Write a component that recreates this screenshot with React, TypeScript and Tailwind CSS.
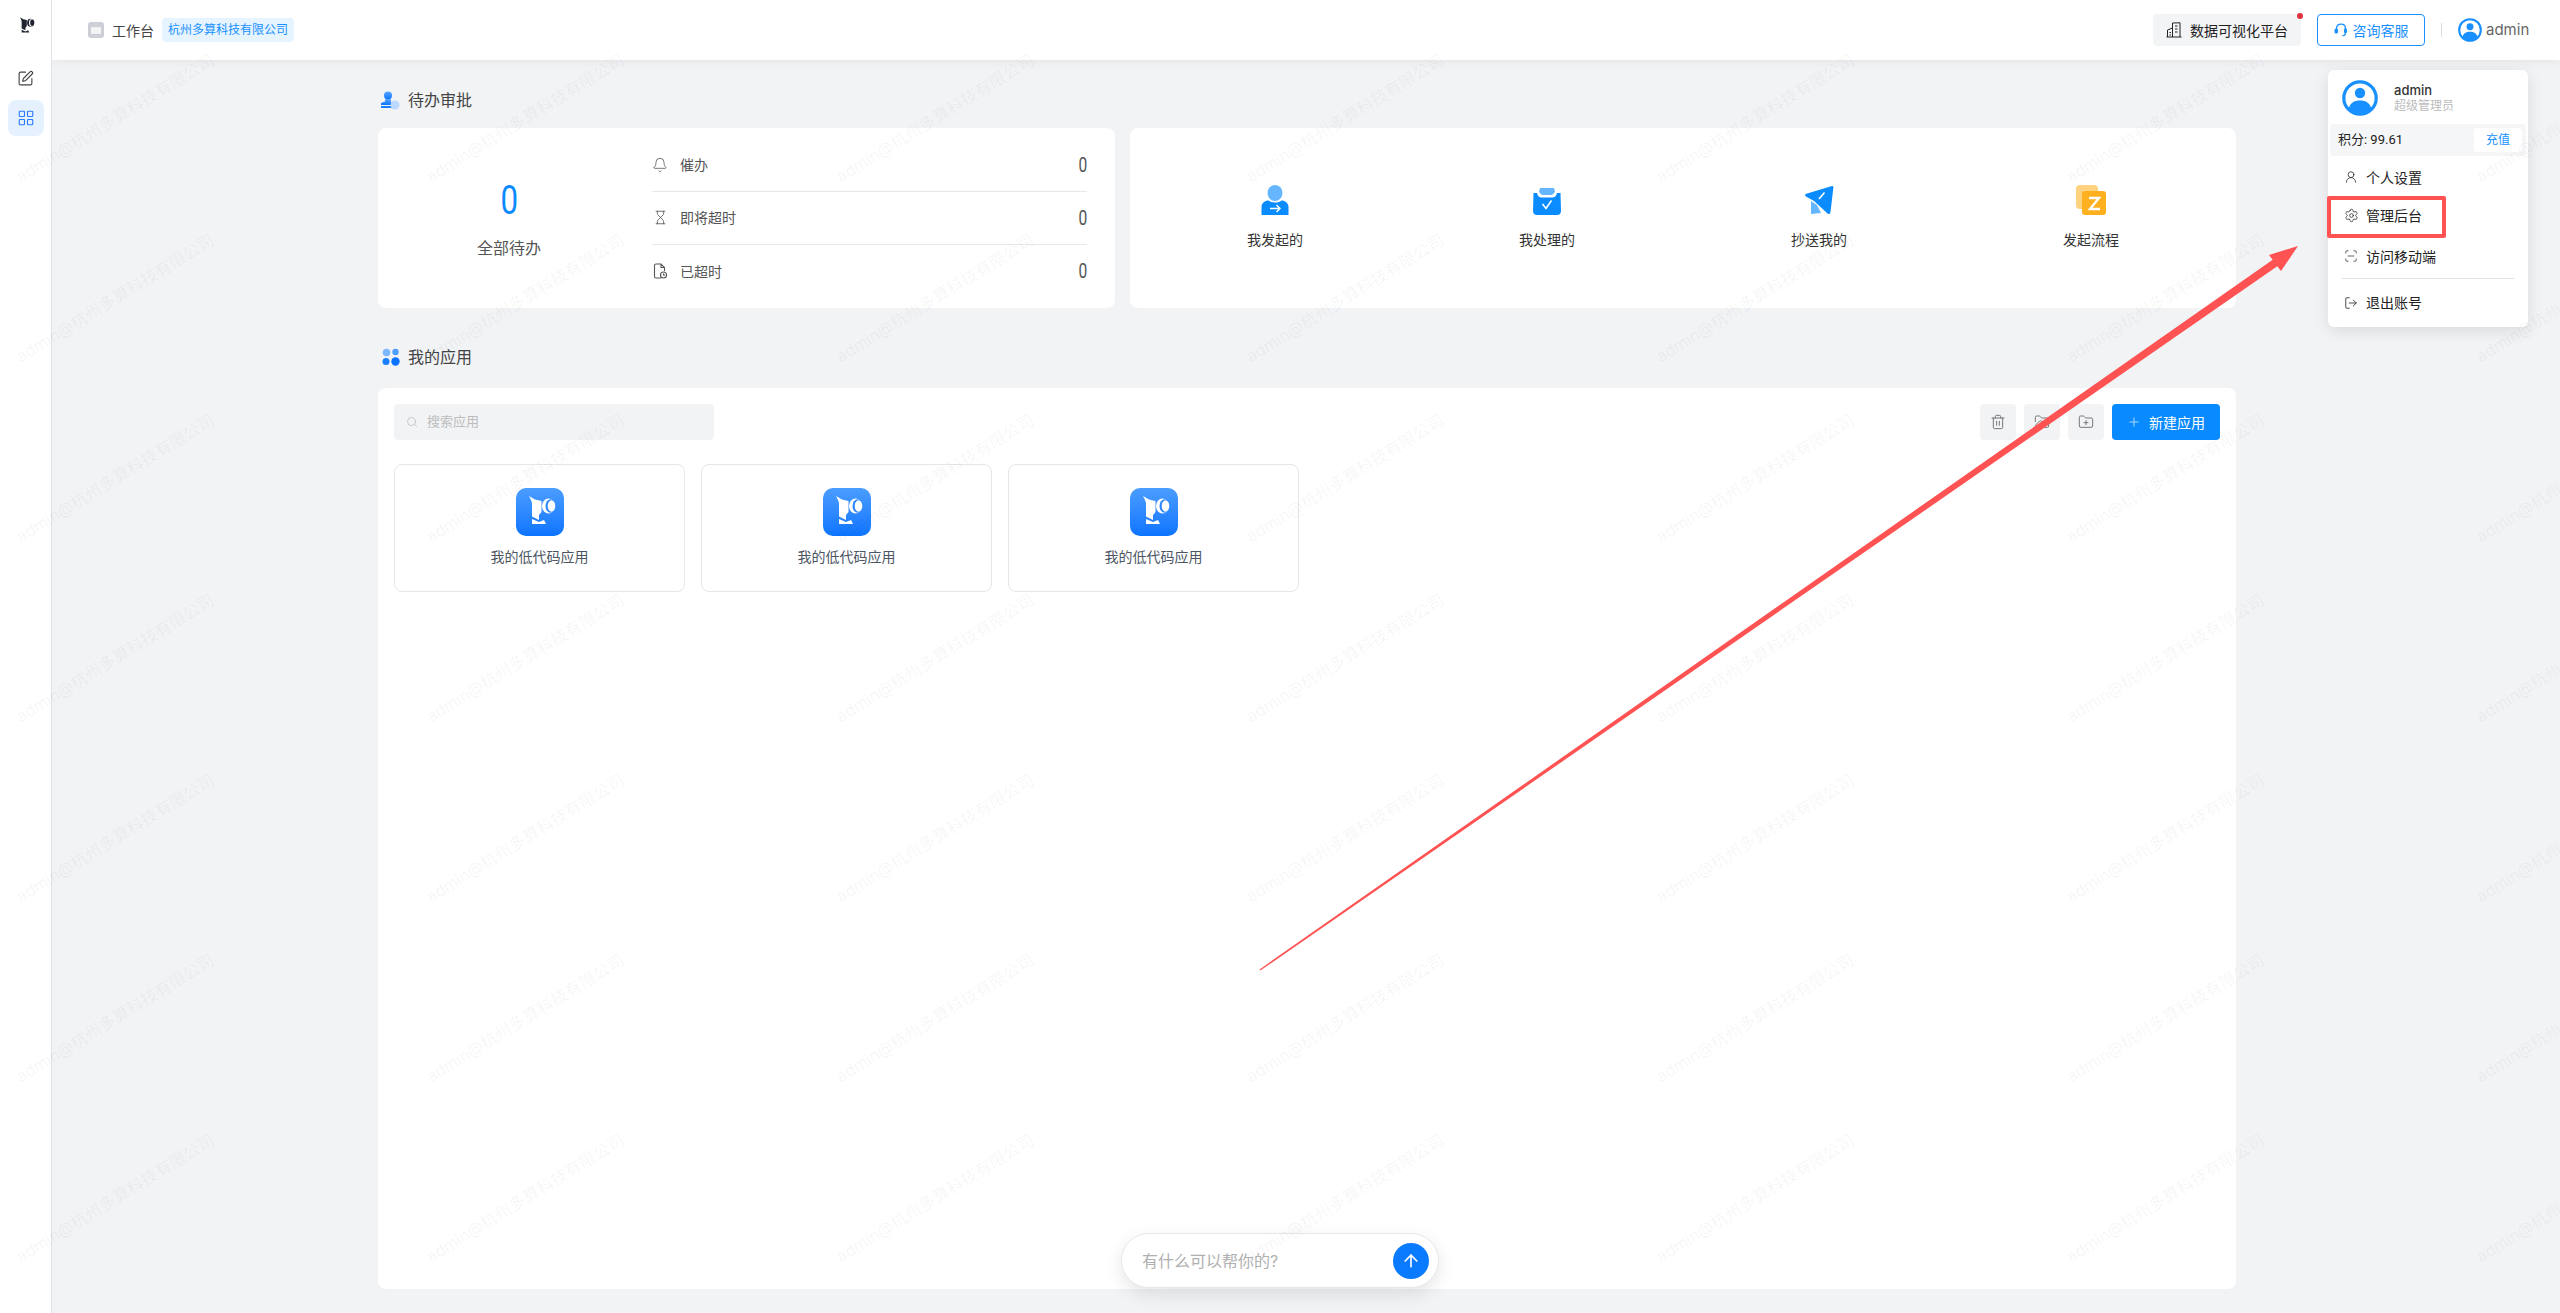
import { Trash2, FolderPen, FolderPlus, UserRound, Settings, ScanLine, LogOut, Bell, Hourglass, SquarePen, LayoutGrid, Search, Plus, ArrowUp } from "lucide-react";

function Logo({ color, bg }: { color: string; bg: string }) {
  return (
    <svg viewBox="0 0 48 48" className="w-full h-full">
      <path d="M13 8 L19 11.5 L25.5 13 L25.5 24 L23 27 L23 32 L16 28.5 L16 15 L15 12 Z" fill={color} />
      <path d="M16 31 L23 34 L28 32 L30 36 L16 36 Z" fill={color} />
      <ellipse cx="32.5" cy="18" rx="6.5" ry="7.5" fill={color} />
      <ellipse cx="34.5" cy="18" rx="5" ry="6.8" fill={bg} />
      <ellipse cx="35.5" cy="18" rx="3.8" ry="5.8" fill={color} />
    </svg>
  );
}

function UserAvatar({ size }: { size: string }) {
  return (
    <svg viewBox="0 0 36 36" className={size}>
      <circle cx="18" cy="18" r="16.2" fill="#fff" stroke="#1890ff" strokeWidth="3.2" />
      <circle cx="18" cy="13" r="5.2" fill="#1890ff" />
      <path d="M6.5 29 C8 23 12 20.5 18 20.5 C24 20.5 28 23 29.5 29 C26 32.5 22 34 18 34 C14 34 10 32.5 6.5 29 Z" fill="#1890ff" />
    </svg>
  );
}

function Watermark() {
  const cells = Array.from({ length: 49 });
  return (
    <div className="absolute left-[-90px] top-[28px] z-40 grid grid-cols-[repeat(7,410px)] auto-rows-[180px] pointer-events-none">
      {cells.map((_, i) => (
        <div key={i} className="flex items-center justify-center">
          <span className="rotate-[-31.5deg] whitespace-nowrap text-[16.5px] text-[rgba(0,0,0,0.05)]">admin@杭州多算科技有限公司</span>
        </div>
      ))}
    </div>
  );
}

function Row({ icon, label, border }: { icon: React.ReactNode; label: string; border?: boolean }) {
  return (
    <div className={`h-[53px] flex items-center ${border ? "border-b border-[#e5e7eb]" : ""}`}>
      <span className="w-[16px] flex justify-center text-[#555]">{icon}</span>
      <span className="ml-[12px] text-[14px] text-[#555]">{label}</span>
      <span className="ml-auto text-[20px] text-[#555] font-['Roboto',sans-serif] inline-block scale-x-[0.78] origin-right">0</span>
    </div>
  );
}

function Action({ icon, label }: { icon: React.ReactNode; label: string }) {
  return (
    <div className="flex flex-col items-center">
      <div className="w-[30px] h-[30px] flex items-center justify-center">{icon}</div>
      <div className="mt-[15px] text-[14px] leading-[20px] text-[#333]">{label}</div>
    </div>
  );
}

function AppCard() {
  return (
    <div className="h-[128px] border border-[#e5e7eb] rounded-lg flex flex-col items-center pt-[23px]">
      <div className="w-[48px] h-[48px] rounded-[10px] bg-gradient-to-b from-[#4a9dff] to-[#0a74ff]">
        <Logo color="#fff" bg="#2e86ff" />
      </div>
      <div className="mt-[11px] text-[14px] leading-[20px] text-[#4b5563]">我的低代码应用</div>
    </div>
  );
}

function MenuItem({ icon, label, h }: { icon: React.ReactNode; label: string; h: string }) {
  return (
    <div className={`flex items-center pl-[15px] text-[14px] text-[#222] ${h}`}>
      <span className="w-[16px] flex justify-center text-[#333]">{icon}</span>
      <span className="ml-[7px]">{label}</span>
    </div>
  );
}

export default function App() {
  return (
    <div className="relative w-[2560px] h-[1313px] overflow-hidden flex bg-[#f1f3f5] font-['Inter','Noto_Sans_CJK_SC',sans-serif]">
      {/* sidebar */}
      <aside className="w-[52px] h-full bg-white border-r border-[#e0e2e7] flex flex-col items-center z-20 shrink-0">
        <div className="w-[26px] h-[26px] mt-[13px]"><Logo color="#1f2430" bg="#fff" /></div>
        <SquarePen className="mt-[31px] w-[17px] h-[17px] text-[#444]" strokeWidth={1.6} />
        <div className="mt-[13px] w-[36px] h-[36px] rounded-lg bg-[#e6f1ff] flex items-center justify-center">
          <LayoutGrid className="w-[18px] h-[18px] text-[#2b7bff]" strokeWidth={1.5} />
        </div>
      </aside>

      <div className="flex-1 flex flex-col min-w-0">
        {/* header */}
        <header className="h-[60px] bg-white shadow-[0_2px_10px_rgba(0,0,0,0.06)] z-10 flex items-center pl-[36px] pr-[32px] shrink-0">
          <div className="w-[16px] h-[16px] rounded-[3px] bg-[#ccd0d6] flex items-center justify-center">
            <div className="w-[10px] h-[7px] bg-[#f2f3f5] rounded-[1px]" />
          </div>
          <span className="ml-[8px] text-[14px] text-[#444]">工作台</span>
          <span className="ml-[8px] h-[24px] px-[6px] rounded bg-[#e6f4ff] text-[#1890ff] text-[12px] leading-[24px]">杭州多算科技有限公司</span>
          <div className="ml-auto relative h-[32px] w-[148px] rounded bg-[#f3f4f6] flex items-center pl-[13px]">
            <svg viewBox="0 0 16 16" className="w-[16px] h-[16px] text-[#222]" fill="none" stroke="currentColor" strokeWidth="1">
              <path d="M0.5 15 H15.5" />
              <path d="M6.5 15 V1 L14 0.8 V15" />
              <path d="M6.5 6 L1.5 8 V15" />
              <path d="M9 4 H11.5 M9 7 H11.5 M9 10 H11.5 M3.5 10.5 H5 M3.5 13 H5" />
            </svg>
            <span className="ml-[8px] text-[14px] text-[#222]">数据可视化平台</span>
            <span className="absolute right-[-2px] top-[-1px] w-[6px] h-[6px] rounded-full bg-[#e0323f]" />
          </div>
          <div className="ml-[16px] h-[32px] w-[108px] rounded border border-[#1890ff] flex items-center justify-center text-[#1890ff] text-[14px]">
            <svg viewBox="0 0 14 14" className="w-[14px] h-[14px]" fill="none">
              <path d="M2.5 6 C2.5 3 4.5 1.2 7 1.2 C9.5 1.2 11.5 3 11.5 6 V10 C11.5 11.5 10.5 12.6 8.5 12.8" stroke="currentColor" strokeWidth="1.3" />
              <rect x="0.5" y="5.5" width="3.5" height="5" rx="1.5" fill="currentColor" />
              <rect x="10" y="5.5" width="3" height="4.5" rx="1.2" fill="currentColor" />
            </svg>
            <span className="ml-[5px]">咨询客服</span>
          </div>
          <div className="ml-[16px] w-px h-[14px] bg-[#ddd]" />
          <UserAvatar size="ml-[16px] w-[24px] h-[24px]" />
          <span className="ml-[4px] w-[42px] text-[15px] text-[#666]">admin</span>
        </header>

        {/* content */}
        <main className="flex-1 flex justify-center min-h-0 pt-[28px] pb-[24px] pl-[2px]">
          <div className="w-[1858px] flex flex-col">
            <div className="h-[24px] flex items-center pl-[2px]">
              <svg viewBox="0 0 20 20" className="w-[20px] h-[20px]">
                <defs>
                  <linearGradient id="pg" x1="0" y1="0" x2="0" y2="1">
                    <stop offset="0" stopColor="#5aa5ff" />
                    <stop offset="1" stopColor="#0a74ff" />
                  </linearGradient>
                </defs>
                <circle cx="8" cy="5.5" r="4" fill="url(#pg)" />
                <path d="M5.5 9 H10.5 L11.5 13 H15 V15 H1 V13.5 C1 12.5 3 12 4.5 12 Z" fill="url(#pg)" />
                <rect x="1" y="16" width="14" height="2" fill="#1a7dff" />
                <circle cx="15" cy="15" r="4.5" fill="#bcd9ff" />
              </svg>
              <span className="ml-[8px] text-[16px] text-[#444]">待办审批</span>
            </div>
            <div className="mt-[16px] h-[180px] flex gap-[15px]">
              <section className="w-[737px] bg-white rounded-lg flex items-center pr-[28px]">
                <div className="w-[262px] flex flex-col items-center">
                  <div className="h-[48px] leading-[48px] text-[40px] text-[#0a8aff] font-['Roboto',sans-serif] inline-block scale-x-[0.78]">0</div>
                  <div className="mt-[11px] text-[16px] leading-[24px] text-[#555]">全部待办</div>
                </div>
                <div className="flex-1 ml-[12px]">
                  <Row icon={<Bell className="w-[16px] h-[16px]" strokeWidth={1.2} />} label="催办" border />
                  <Row icon={<Hourglass className="w-[15px] h-[15px]" strokeWidth={1.3} />} label="即将超时" border />
                  <Row icon={
                    <svg viewBox="0 0 16 16" className="w-[16px] h-[16px]" fill="none" stroke="currentColor" strokeWidth="1.1">
                      <path d="M9 15 H4 C3 15 2.5 14.5 2.5 13.5 V2.5 C2.5 1.5 3 1 4 1 H9 L12.5 4.5 V8" />
                      <path d="M9 1 V4.5 H12.5" />
                      <circle cx="11.5" cy="12" r="3" />
                      <path d="M11.5 10.5 V12 H13" />
                    </svg>
                  } label="已超时" />
                </div>
              </section>
              <section className="flex-1 bg-white rounded-lg grid grid-cols-4 px-[9px] items-start pt-[57px]">
                <Action label="我发起的" icon={
                  <svg viewBox="0 0 30 30" className="w-[30px] h-[30px]">
                    <ellipse cx="15" cy="8" rx="7.5" ry="8" fill="#66b5ff" />
                    <path d="M1.5 30 V22 C1.5 18 5 15.5 8.5 15.5 C10 17 12 17.5 15 17.5 C18 17.5 20 17 21.5 15.5 C25 15.5 28.5 18 28.5 22 V30 Z" fill="#0a8cff" />
                    <path d="M10 23.5 H20 M16.5 20 L20 23.5 L16.5 27" stroke="#fff" strokeWidth="1.4" fill="none" />
                  </svg>
                } />
                <Action label="我处理的" icon={
                  <svg viewBox="0 0 30 30" className="w-[30px] h-[30px]">
                    <path d="M8 3 H22 L23 7 L20 10 H10 L7 7 Z" fill="#66b5ff" />
                    <path d="M1.5 8 H5 C6 12 8 12.5 10 12.5 H20 C22 12.5 24 12 25 8 H28.5 L29 26 C29 28.5 27.5 30 25 30 H5 C2.5 30 1 28.5 1 26 Z" fill="#0a8cff" />
                    <path d="M10.5 19 L14 23.5 L19.5 15.5" stroke="#fff" strokeWidth="1.6" fill="none" />
                  </svg>
                } />
                <Action label="抄送我的" icon={
                  <svg viewBox="0 0 30 30" className="w-[30px] h-[30px]">
                    <path d="M1.5 9 L28 1 C29 1 29.5 1.5 29.4 2.5 L26.5 27 C26 29.5 24 29.5 23 28 L10 16 L2 11.5 C1 11 1 9.5 1.5 9 Z" fill="#0a8cff" />
                    <path d="M7 16 L13 20 L17 28 L7 29 Z" fill="#66b5ff" />
                    <path d="M15 14 L20.5 7.5" stroke="#fff" strokeWidth="1.6" />
                  </svg>
                } />
                <Action label="发起流程" icon={
                  <svg viewBox="0 0 30 30" className="w-[30px] h-[30px]">
                    <rect x="0" y="0" width="22" height="24" rx="4" fill="#ffd27f" />
                    <rect x="6" y="6" width="24" height="24" rx="3" fill="#ffb01f" />
                    <path d="M13 13 H23 L14 24 H24" stroke="#fff" strokeWidth="2.4" fill="none" />
                  </svg>
                } />
              </section>
            </div>

            <div className="mt-[37px] h-[24px] flex items-center pl-[4px]">
              <svg viewBox="0 0 18 18" className="w-[18px] h-[18px]">
                <circle cx="4.5" cy="4.5" r="3.8" fill="#7cb8ff" />
                <circle cx="13.5" cy="4" r="3.2" fill="#4d9fff" />
                <circle cx="4" cy="13.5" r="3.5" fill="#1a80ff" />
                <circle cx="13.5" cy="13.5" r="4.2" fill="#0a74ff" />
              </svg>
              <span className="ml-[8px] text-[16px] text-[#444]">我的应用</span>
            </div>
            <section className="mt-[19px] flex-1 bg-white rounded-lg p-[16px]">
              <div className="flex items-center">
                <div className="w-[320px] h-[36px] rounded bg-[#f1f3f5] flex items-center pl-[12px]">
                  <Search className="w-[12px] h-[12px] text-[#bbb]" strokeWidth={1.5} />
                  <span className="ml-[9px] text-[13px] text-[#bdbdbd]">搜索应用</span>
                </div>
                <div className="ml-auto flex gap-[8px]">
                  <div className="w-[36px] h-[36px] rounded bg-[#f1f3f5] flex items-center justify-center text-[#777]"><Trash2 className="w-[16px] h-[16px]" strokeWidth={1.5} /></div>
                  <div className="w-[36px] h-[36px] rounded bg-[#f1f3f5] flex items-center justify-center text-[#777]"><FolderPen className="w-[16px] h-[16px]" strokeWidth={1.5} /></div>
                  <div className="w-[36px] h-[36px] rounded bg-[#f1f3f5] flex items-center justify-center text-[#777]"><FolderPlus className="w-[16px] h-[16px]" strokeWidth={1.5} /></div>
                  <div className="w-[108px] h-[36px] rounded bg-[#0a8aff] flex items-center justify-center text-white text-[14px]">
                    <Plus className="w-[14px] h-[14px] text-[#b5dcff]" strokeWidth={1.6} />
                    <span className="ml-[8px]">新建应用</span>
                  </div>
                </div>
              </div>
              <div className="mt-[24px] grid grid-cols-[repeat(3,291px)] gap-[16px]">
                <AppCard />
                <AppCard />
                <AppCard />
              </div>
            </section>
          </div>
        </main>
      </div>

      {/* floating chat input */}
      <div className="absolute left-[1121px] bottom-[25px] z-30 w-[318px] h-[55px] rounded-full bg-white border border-[#e5e7eb] shadow-[0_6px_18px_rgba(0,0,0,0.1)] flex items-center pl-[20px] pr-[9px]">
        <span className="text-[16px] text-[#b0b0b0]">有什么可以帮你的?</span>
        <div className="ml-auto w-[36px] h-[36px] rounded-full bg-[#0a7aff] flex items-center justify-center">
          <ArrowUp className="w-[20px] h-[20px] text-white" strokeWidth={2} />
        </div>
      </div>

      {/* dropdown */}
      <div className="absolute left-[2328px] top-[70px] z-30 w-[200px] h-[257px] bg-white rounded-md shadow-[0_4px_16px_rgba(0,0,0,0.1)]">
        <div className="flex items-start h-[54px] pl-[14px] pt-[10px]">
          <UserAvatar size="w-[36px] h-[36px]" />
          <div className="ml-[16px] mt-[2px]">
            <div className="text-[13px] leading-[16px] font-medium text-[#333]">admin</div>
            <div className="text-[12px] leading-[16px] text-[#bbb]">超级管理员</div>
          </div>
        </div>
        <div className="mx-[2px] h-[32px] bg-[#f5f6f8] rounded flex items-center pl-[8px] pr-[4px]">
          <span className="text-[13px] text-[#222] font-['Roboto','Noto_Sans_CJK_SC',sans-serif] -mt-[1px]">积分: 99.61</span>
          <span className="ml-auto w-[48px] h-[24px] rounded bg-white text-[12px] leading-[24px] text-center text-[#1890ff]">充值</span>
        </div>
        <div className="mt-[2px]">
          <MenuItem h="h-[38px]" icon={<UserRound className="w-[14px] h-[14px]" strokeWidth={1.4} />} label="个人设置" />
          <MenuItem h="h-[38px]" icon={<Settings className="w-[15px] h-[15px]" strokeWidth={1.3} />} label="管理后台" />
          <MenuItem h="h-[44px]" icon={<ScanLine className="w-[14px] h-[14px]" strokeWidth={1.3} />} label="访问移动端" />
          <div className="mx-[14px] h-px bg-[#e1e3e8]" />
          <MenuItem h="h-[47px]" icon={<LogOut className="w-[14px] h-[14px]" strokeWidth={1.5} />} label="退出账号" />
        </div>
      </div>

      <Watermark />

      {/* annotations */}
      <div className="absolute left-[2327px] top-[196px] z-50 w-[119px] h-[42px] border-[4px] border-[#ff5252] rounded-[2px]" />
      <svg className="absolute left-0 top-0 z-50 pointer-events-none" width="2560" height="1313" viewBox="0 0 2560 1313">
        <polygon points="1259.6,969.4 2272.7,259.7 2269,255 2298,246 2281,271 2277.3,266.3 1260.4,970.6" fill="#ff5252" />
      </svg>
    </div>
  );
}
